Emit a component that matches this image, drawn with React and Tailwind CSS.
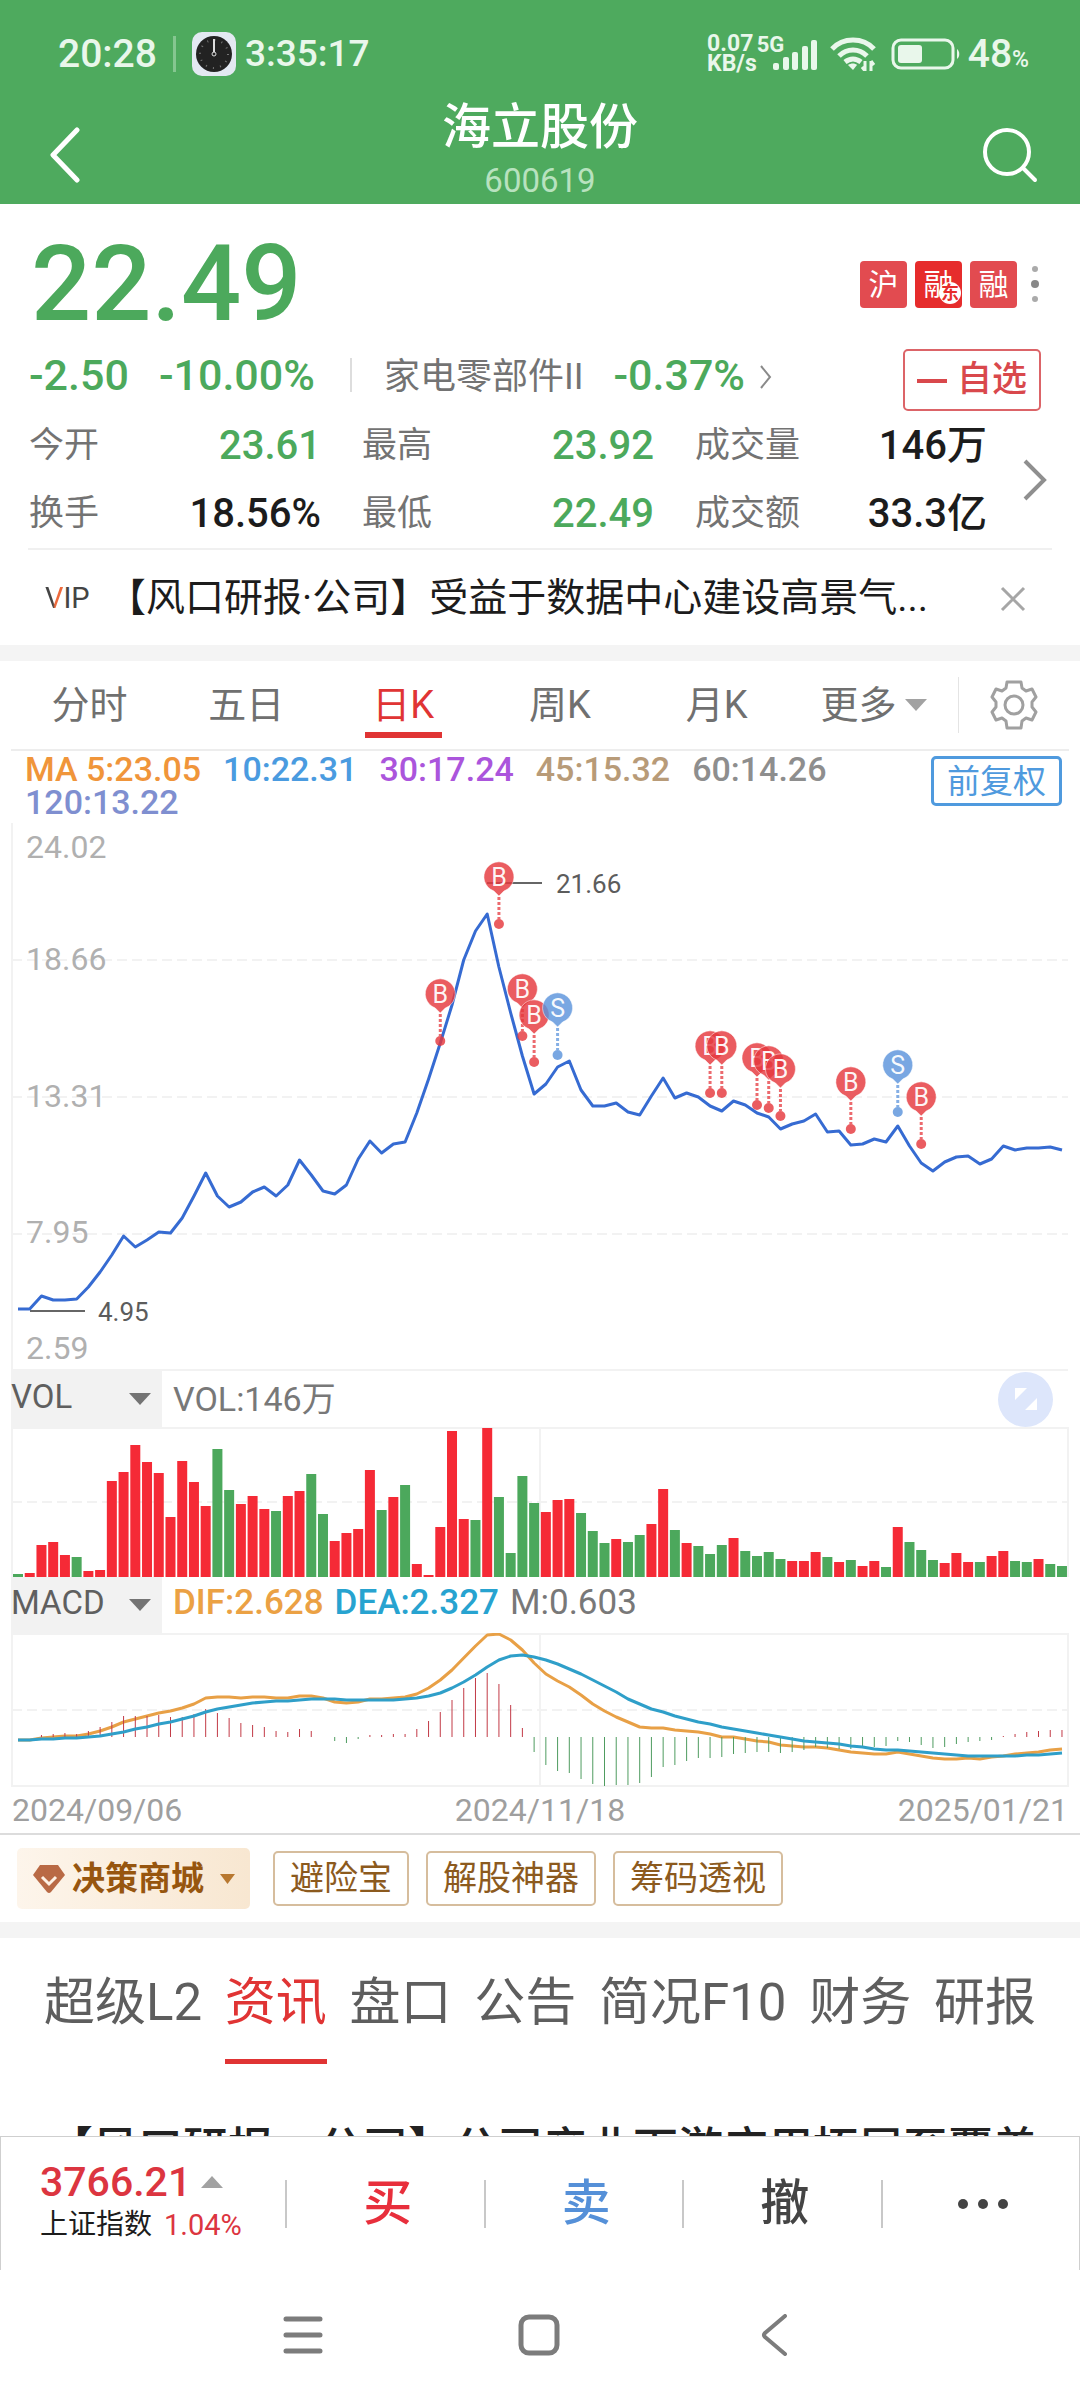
import { useState } from "react";

/* ================= DATA ================= */

const STATS = [
    { label: "今开", value: "23.61", down: true },
    { label: "最高", value: "23.92", down: true },
    { label: "成交量", value: "146万" },
    { label: "换手", value: "18.56%" },
    { label: "最低", value: "22.49", down: true },
    { label: "成交额", value: "33.3亿" }
];

const PERIODS = ["分时", "五日", "日K", "周K", "月K"];

const MA = [
    { text: "MA 5:23.05", color: "text-[#f0953a]" },
    { text: "10:22.31", color: "text-[#4a9be0]" },
    { text: "30:17.24", color: "text-[#ab55dc]" },
    { text: "45:15.32", color: "text-[#b89b78]" },
    { text: "60:14.26", color: "text-[#8e8e8e]" },
    { text: "120:13.22", color: "text-[#7f8fd0]" }
];

const TOOLS = ["避险宝", "解股神器", "筹码透视"];

const SECTIONS = ["超级L2", "资讯", "盘口", "公告", "简况F10", "财务", "研报"];

// close price line, y in chart units
const PRICE = [
    486, 486, 473, 477, 477, 476, 464, 449, 432, 413, 424, 417, 409, 410, 395,
    373, 350, 373, 384, 379, 369, 364, 373, 362, 337, 352, 368, 371, 362, 336,
    318, 330, 321, 319, 290, 256, 220, 182, 137, 108, 91, 144, 190, 233, 271,
    261, 244, 238, 267, 283, 283, 280, 289, 292, 273, 255, 275, 270, 274, 283,
    288, 278, 282, 290, 294, 306, 301, 298, 291, 309, 308, 322, 321, 316, 319,
    303, 323, 340, 348, 339, 334, 333, 341, 336, 323, 327, 325, 325, 324, 327
];

const PINS = [
    { i: 36, y: 218, type: "B" },
    { i: 41, y: 101, type: "B" },
    { i: 43, y: 213, type: "B" },
    { i: 44, y: 239, type: "B" },
    { i: 46, y: 232, type: "S" },
    { i: 59, y: 270, type: "B" },
    { i: 60, y: 270, type: "B" },
    { i: 63, y: 282, type: "B" },
    { i: 64, y: 285, type: "B" },
    { i: 65, y: 293, type: "B" },
    { i: 71, y: 306, type: "B" },
    { i: 75, y: 289, type: "S" },
    { i: 77, y: 321, type: "B" }
];

// volume, negative = falling day
const VOLUME = [
    -3, 4, 32, 35, 22, -20, 6, 7, 96, 105, 132, 115, 104, 60, 116,
    95, 71, -128, -87, 73, 81, 68, -66, 81, 86, -103, -63, 36, 44, 48,
    107, -67, 80, -92, 13, 2, 50, 146, 58, -57, 149, -80, -24, -101, -74,
    65, 77, 78, -64, -46, -34, 38, -35, -42, 53, 88, -47, 34, -31, -23,
    -32, 39, -26, -21, -25, -18, 16, 16, 25, -20, 15, -17, 11, 16, -10,
    50, -35, -27, -17, 14, 24, 15, -15, 21, 26, -16, -15, 18, -13, -11
];

const MACD = [
    0, 0, 2, 3, 4, 3, 6, 10, 15, 21, 21, 21, 22, 20, 20,
    23, 28, 24, 19, 14, 12, 10, 6, 5, 8, 6, 0, -4, -6, -2,
    2, 2, 3, 3, 8, 16, 25, 37, 49, 59, 64, 53, 32, 9, -15,
    -28, -34, -36, -42, -47, -49, -48, -48, -46, -40, -30, -28, -24, -21, -21,
    -20, -17, -16, -15, -15, -16, -15, -13, -10, -11, -12, -12, -11, -10, -9,
    -4, -5, -8, -11, -10, -7, -5, -4, -3, 1, 3, 5, 6, 7, 7
];

const DIF = [
    107, 107, 105, 104, 103, 103, 101, 98, 94, 89, 86, 83, 80, 78, 75,
    71, 65, 64, 64, 65, 64, 64, 65, 65, 63, 63, 65, 69, 70, 69,
    66, 66, 65, 64, 61, 55, 47, 37, 25, 13, 2, 1, 7, 17, 30,
    41, 48, 54, 62, 71, 78, 84, 89, 94, 95, 95, 97, 98, 99, 101,
    104, 104, 106, 108, 109, 112, 113, 114, 114, 115, 117, 119, 120, 121, 121,
    119, 121, 123, 125, 126, 126, 125, 126, 124, 123, 121, 120, 119, 117, 116
];

const DEA = [
    107, 107, 106, 106, 105, 105, 104, 103, 101, 99, 96, 94, 91, 89, 86,
    83, 79, 76, 74, 72, 70, 69, 68, 68, 67, 66, 66, 66, 67, 67,
    67, 67, 67, 66, 65, 63, 60, 55, 49, 42, 34, 27, 23, 22, 24,
    27, 31, 36, 41, 47, 53, 59, 66, 71, 76, 79, 83, 86, 89, 91,
    94, 96, 98, 100, 102, 104, 106, 108, 109, 110, 111, 113, 114, 116, 117,
    117, 118, 119, 120, 121, 122, 123, 123, 123, 123, 123, 122, 122, 121, 120
];

const GRID = "#f2f2f2";
const RED = "#f52a36";
const GREEN = "#4ca85c";

const xAt = i => 18 + i * 11.73;
const toPoints = list => list.map((y, i) => `${xAt(i).toFixed(1)},${y}`).join(" ");

/* ================= APP ================= */

export default function App() {
    const [period, setPeriod] = useState("日K");
    const [section, setSection] = useState("资讯");

    return (
        <div className="flex h-screen flex-col overflow-hidden bg-white font-['Roboto','Noto_Sans_CJK_SC',sans-serif] text-[#222]">
            <header className="shrink-0 bg-[#4eaa5e] text-white">
                <StatusBar />
                <TitleBar />
            </header>

            <main className="min-h-0 flex-1 overflow-hidden">
                <Quote />
                <Notice />
                <div className="h-4 bg-[#f4f4f4]" />

                {/* PERIOD TABS */}
                <div className="mx-[11px] flex h-[90px] items-center border-b-2 border-[#ededed] text-[38px] text-[#707070]">
                    <div className="flex h-full flex-1 pr-[6px]">
                        {PERIODS.map(name => (
                            <button
                                key={name}
                                onClick={() => setPeriod(name)}
                                className={
                                    period === name
                                        ? "flex h-full flex-1 flex-col items-center text-[#e03434]"
                                        : "flex h-full flex-1 flex-col items-center"
                                }
                            >
                                <span className="mt-[17px] leading-[54px]">{name}</span>
                                {period === name && (
                                    <span className="h-[6px] w-[77px] bg-[#e03434]" />
                                )}
                            </button>
                        ))}
                        <button className="flex h-full flex-1 items-center justify-center gap-[8px]">
                            更多
                            <Triangle className="h-[12px] w-[22px] fill-[#a2a2a2]" />
                        </button>
                    </div>
                    <div className="h-[56px] w-px bg-[#e4e4e4]" />
                    <button aria-label="设置" className="flex w-[110px] justify-center">
                        <GearIcon />
                    </button>
                </div>

                {/* MA LEGEND */}
                <div className="flex h-[72px] items-start justify-between pt-[2px] pr-[18px] pl-[25px]">
                    <div className="flex w-[860px] flex-wrap gap-x-[22px] text-[34px] leading-[33px] font-medium">
                        {MA.map(item => (
                            <span key={item.text} className={item.color}>{item.text}</span>
                        ))}
                    </div>
                    <button className="mt-[3px] h-[50px] rounded-[5px] border-[3px] border-[#4f9ade] px-[13px] text-[33px] leading-[46px] whitespace-nowrap text-[#4f9ade]">
                        前复权
                    </button>
                </div>

                <PriceChart />

                {/* VOL */}
                <div className="mx-[11px] flex h-[56px]">
                    <IndicatorSelect label="副图指标一" options={["VOL", "MACD", "KDJ"]} />
                    <div className="flex flex-1 items-center justify-between pr-4 pl-[11px] text-[34px] text-[#787878]">
                        <span>VOL:146万</span>
                        <button
                            aria-label="全屏"
                            className="flex size-[55px] items-center justify-center rounded-full bg-[#dde6fb]"
                        >
                            <svg viewBox="0 0 22 22" className="size-[22px] fill-white">
                                <path d="M0 0h12L0 12zM22 22H10l12-12z" />
                            </svg>
                        </button>
                    </div>
                </div>
                <VolumeChart />

                {/* MACD */}
                <div className="mx-[11px] flex h-[56px]">
                    <IndicatorSelect label="副图指标二" options={["MACD", "VOL", "KDJ"]} />
                    <div className="flex items-center gap-[11px] pb-1 pl-[11px] text-[35px] font-medium">
                        <span className="text-[#eba144]">DIF:2.628</span>
                        <span className="text-[#27a3d0]">DEA:2.327</span>
                        <span className="font-normal text-[#787878]">M:0.603</span>
                    </div>
                </div>
                <MacdChart />

                <div className="flex h-[48px] items-center justify-between border-b-2 border-[#dcdcdc] px-3 text-[32px] text-[#9f9f9f]">
                    <span>2024/09/06</span>
                    <span>2024/11/18</span>
                    <span>2025/01/21</span>
                </div>

                {/* TOOLS */}
                <div className="flex h-[87px] items-center pl-[17px] text-[34px] text-[#8c5a1e]">
                    <button className="mr-[23px] flex h-[61px] items-center rounded-[5px] bg-linear-to-r from-[#fdf5eb] to-[#f8e7d1] pr-[15px] pl-4 text-[33px] font-bold text-[#97560f]">
                        <DiamondIcon />
                        <span className="mr-4 ml-[7px]">决策商城</span>
                        <Triangle className="h-[10px] w-[15px] fill-[#b87830]" />
                    </button>
                    <div className="flex gap-[17px]">
                        {TOOLS.map(name => (
                            <button
                                key={name}
                                className="h-[55px] rounded-[5px] border-2 border-[#d6bd9d] px-[15px] leading-[51px]"
                            >
                                {name}
                            </button>
                        ))}
                    </div>
                </div>
                <div className="h-4 bg-[#f4f4f4]" />

                {/* NEWS */}
                <div className="flex justify-between px-[44px] text-[51px] text-[#5e5e5e]">
                    {SECTIONS.map(name => (
                        <button
                            key={name}
                            onClick={() => setSection(name)}
                            className={
                                section === name
                                    ? "border-b-[5px] border-[#e03434] pt-[33px] pb-[24px] leading-[64px] text-[#e03434]"
                                    : "border-b-[5px] border-transparent pt-[33px] pb-[24px] leading-[64px]"
                            }
                        >
                            {name}
                        </button>
                    ))}
                </div>
                <a
                    href="#news"
                    className="mt-[52px] ml-[48px] block font-['Noto_Sans_CJK_SC',sans-serif] text-[45px] leading-[60px] font-medium whitespace-nowrap text-[#222]"
                >
                    【风口研报·公司】公司产业下游应用拓展至覆盖
                </a>
            </main>

            <TradeBar />
            <SystemNav />
        </div>
    );
}

/* ================= HEADER ================= */

function StatusBar() {
    return (
        <div className="flex h-[100px] items-center justify-between pt-2 pr-[51px] pl-[58px] text-[#e9f7eb]">
            <div className="flex items-center text-[39px]">
                <span className="font-medium">20:28</span>
                <span className="mx-4 h-9 w-[3px] bg-[#85c690]" />
                <svg viewBox="0 0 44 44" className="mr-[9px] size-[44px]">
                    <rect width="44" height="44" rx="10" fill="#e3e9f2" />
                    <circle cx="22" cy="22" r="18" fill="#222" />
                    <circle
                        cx="22" cy="22" r="14" fill="none" stroke="#777"
                        strokeWidth="2" strokeDasharray="1 6.33"
                    />
                    <path d="M22 7v14" stroke="#ddd" strokeWidth="2" />
                    <circle cx="22" cy="22" r="2" fill="#222" stroke="#ddd" />
                </svg>
                <span className="text-[37px] font-medium">3:35:17</span>
            </div>

            <div className="flex items-center">
                <div className="text-[23px] leading-[20px] font-bold">
                    <div>0.07</div>
                    <div>KB/s</div>
                </div>
                {/* signal */}
                <div className="mr-[13px] flex h-[36px] flex-col">
                    <span className="text-[22px] leading-[18px] font-bold">5G</span>
                    <svg viewBox="0 0 44 30" className="-mt-[14px] ml-[16px] h-[30px] w-[44px] fill-current">
                        <rect x="0" y="23" width="6" height="7" rx="2" />
                        <rect x="10" y="17" width="6" height="13" rx="2" />
                        <rect x="19" y="12" width="6" height="18" rx="2" />
                        <rect x="29" y="6" width="6" height="24" rx="2" />
                        <rect x="38" y="0" width="6" height="30" rx="2" />
                    </svg>
                </div>
                <svg viewBox="0 0 46 34" className="mr-[15px] h-[34px] w-[46px]" fill="none" stroke="currentColor">
                    <path d="M2 12C13 0 33 0 44 12" strokeWidth="5" />
                    <path d="M9 19c8-8 20-8 28 0" strokeWidth="5" />
                    <path d="M15 25c5-4 11-4 16 0" strokeWidth="5" />
                    <path d="M18 28c3-2 7-2 9 0l-4 5z" fill="currentColor" stroke="none" />
                    <path d="M35 24v10M41 34V24M35 34l-3-4M41 24l3 4" strokeWidth="3" />
                </svg>
                <svg viewBox="0 0 70 32" className="mr-[7px] h-[32px] w-[70px]">
                    <rect x="2" y="2" width="60" height="28" rx="8" fill="none" stroke="currentColor" strokeWidth="3" />
                    <rect x="7" y="7" width="24" height="18" rx="3" fill="currentColor" />
                    <path d="M66 11c3 2 3 8 0 10z" fill="currentColor" />
                </svg>
                <div className="flex items-baseline font-medium">
                    <span className="text-[39px]">48</span>
                    <span className="text-[23px]">%</span>
                </div>
            </div>
        </div>
    );
}

function TitleBar() {
    return (
        <div className="grid h-[104px] grid-cols-[1fr_auto_1fr] items-center px-[42px]">
            <button aria-label="返回" className="mt-[6px] ml-[7px] justify-self-start">
                <svg viewBox="0 0 32 56" className="h-[56px] w-[32px]" fill="none" stroke="white" strokeWidth="5" strokeLinecap="round" strokeLinejoin="round">
                    <path d="M28 3L4 28l24 25" />
                </svg>
            </button>
            <div className="flex h-full flex-col items-center">
                <h1 className="mt-[2px] text-[49px] leading-[52px] font-medium">海立股份</h1>
                <div className="mt-[5px] text-[33px] leading-[44px] text-[#b8e2bf]">600619</div>
            </div>
            <button aria-label="搜索" className="mt-[6px] justify-self-end">
                <svg viewBox="0 0 56 56" className="size-[56px]" fill="none" stroke="white" strokeWidth="4" strokeLinecap="round">
                    <circle cx="25" cy="25" r="22" />
                    <path d="M41 41l12 12" />
                </svg>
            </button>
        </div>
    );
}

/* ================= QUOTE ================= */

function Quote() {
    return (
        <section className="pt-6">
            <div className="flex items-center justify-between pr-[41px] pl-[31px]">
                <div className="text-[106px] leading-[112px] font-medium text-[#4ca95c]">22.49</div>
                <div className="flex items-center gap-2 text-[30px] leading-[47px] text-white">
                    <span className="size-[47px] rounded-[4px] bg-[#e24b50] text-center">沪</span>
                    <span className="relative size-[47px] rounded-[4px] bg-[#e62c2c] text-center">
                        融
                        <span className="absolute right-[1px] bottom-[4px] size-[22px] rounded-full bg-white text-[18px] leading-[21px] font-bold text-[#e62c2c]">
                            东
                        </span>
                    </span>
                    <span className="size-[47px] rounded-[4px] bg-[#e24b50] text-center">融</span>
                    <button aria-label="更多标签" className="ml-[6px] flex flex-col items-center gap-[8px]">
                        <span className="size-[6px] rounded-full bg-[#aaa]" />
                        <span className="size-[8px] rounded-full bg-[#888]" />
                        <span className="size-[6px] rounded-full bg-[#aaa]" />
                    </button>
                </div>
            </div>

            <div className="mt-2 flex h-[63px] items-center justify-between pr-[39px] pl-[29px]">
                <div className="flex items-center pb-[10px] text-[43px] leading-[48px] text-[#4ca95c]">
                    <span className="font-medium">-2.50</span>
                    <span className="ml-[30px] font-medium">-10.00%</span>
                    <span className="ml-[35px] h-[34px] w-[2px] bg-[#ddd]" />
                    <a href="#sector" className="ml-8 flex items-center">
                        <span className="mt-1 text-[36px] text-[#737373]">家电零部件II</span>
                        <span className="ml-[30px] font-medium">-0.37%</span>
                        <svg viewBox="0 0 14 24" className="mt-1 ml-[14px] h-[24px] w-[14px]" fill="none" stroke="#8a8a8a" strokeWidth="2">
                            <path d="M2 1l9 11-9 11" />
                        </svg>
                    </a>
                </div>
                <button className="flex h-[62px] w-[138px] items-center justify-center gap-[10px] rounded-[5px] border-2 border-[#dc6468] pt-[2px] text-[35px] font-medium text-[#d9484c]">
                    <span className="h-[4px] w-[30px] bg-[#d9484c]" />
                    自选
                </button>
            </div>

            <div className="flex items-center pl-[29px]">
                <dl className="grid flex-1 grid-cols-3 gap-x-[41px] pt-px">
                    {STATS.map(item => (
                        <div key={item.label} className="flex h-[68px] items-center justify-between">
                            <dt className="text-[35px] text-[#737373]">{item.label}</dt>
                            <dd
                                className={
                                    item.down
                                        ? "text-[40px] font-medium text-[#4ca95c]"
                                        : "text-[40px] font-medium text-[#1c1c1c]"
                                }
                            >
                                {item.value}
                            </dd>
                        </div>
                    ))}
                </dl>
                <button aria-label="展开" className="mr-[32px] ml-[35px]">
                    <svg viewBox="0 0 26 42" className="h-[42px] w-[26px]" fill="none" stroke="#8f8f8f" strokeWidth="4">
                        <path d="M3 2l19 19L3 40" />
                    </svg>
                </button>
            </div>
        </section>
    );
}

function Notice() {
    return (
        <div className="mx-[28px] flex h-[97px] items-center border-t-2 border-[#f0f0f0] pt-[2px]">
            <span className="ml-[17px] w-[62px] text-[29px] text-[#444]">
                <span className="bg-linear-to-r from-[#444] from-45% to-[#ee6a3c] to-55% bg-clip-text text-transparent">V</span>
                IP
            </span>
            <a href="#report" className="min-w-0 flex-1 truncate text-[39px] text-[#1c1c1c]">
                【风口研报·公司】受益于数据中心建设高景气...
            </a>
            <button aria-label="关闭" className="mr-[26px] ml-10">
                <svg viewBox="0 0 26 26" className="size-[26px]" stroke="#a6a6a6" strokeWidth="3">
                    <path d="M2 2l22 22M24 2L2 24" />
                </svg>
            </button>
        </div>
    );
}

/* ================= CHARTS ================= */

function IndicatorSelect({ label, options }) {
    return (
        <div className="relative h-full w-[151px] bg-[#f2f2f2]">
            <select
                aria-label={label}
                className="h-full w-full appearance-none bg-transparent pb-1 text-[33px] text-[#5f5f5f] outline-none"
            >
                {options.map(name => (
                    <option key={name}>{name}</option>
                ))}
            </select>
            <Triangle className="pointer-events-none absolute top-[22px] right-[11px] h-[12px] w-[22px] fill-[#747474]" />
        </div>
    );
}

function PriceChart() {
    return (
        <svg viewBox="0 0 1080 548" className="block w-full">
            <path d="M12 0V547H1068" fill="none" stroke={GRID} strokeWidth="2" />
            <path
                d="M12 137H1068M12 274H1068M12 411H1068"
                stroke={GRID} strokeWidth="2" strokeDasharray="10 5"
            />
            <g fill="#b0b0b0" fontSize="32">
                <text x="26" y="35">24.02</text>
                <text x="26" y="147">18.66</text>
                <text x="26" y="284">13.31</text>
                <text x="26" y="420">7.95</text>
                <text x="26" y="536">2.59</text>
            </g>
            <path d="M30 488H85M487 60H542" stroke="#666" strokeWidth="2" />
            <g fill="#5c5c5c" fontSize="26">
                <text x="98" y="498">4.95</text>
                <text x="556" y="70">21.66</text>
            </g>
            <polyline points={toPoints(PRICE)} fill="none" stroke="#366bd2" strokeWidth="3" strokeLinejoin="round" />
            {PINS.map(pin => (
                <TradePin key={pin.i} {...pin} />
            ))}
        </svg>
    );
}

function TradePin({ i, y, type }) {
    const x = xAt(i);
    const color = type === "B" ? "#e5383d" : "#5c94dc";
    return (
        <g fill={color} fillOpacity="0.82">
            <path
                d={`M${x - 5} ${y - 33}A15 15 0 1 1 ${x + 5} ${y - 33}L${x} ${y - 28}z`}
                stroke="white" strokeOpacity="0.5"
            />
            <path d={`M${x} ${y - 27}V${y - 5}`} stroke={color} strokeOpacity="0.75" strokeWidth="3" strokeDasharray="3 2" />
            <circle cx={x} cy={y} r="5" />
            <text x={x} y={y - 38} textAnchor="middle" fontSize="25" fill="white" fillOpacity="0.95">
                {type}
            </text>
        </g>
    );
}

function VolumeChart() {
    return (
        <svg viewBox="0 0 1080 150" className="block w-full">
            <path d="M12 150V1H1068V150M540 1V150" fill="none" stroke={GRID} strokeWidth="2" />
            <path d="M12 75H1068" stroke={GRID} strokeWidth="2" strokeDasharray="10 5" />
            {VOLUME.map((v, i) => (
                <rect
                    key={i}
                    x={xAt(i) - 5}
                    y={150 - Math.abs(v)}
                    width="10"
                    height={Math.abs(v)}
                    fill={v < 0 ? GREEN : RED}
                />
            ))}
        </svg>
    );
}

function MacdChart() {
    return (
        <svg viewBox="0 0 1080 154" className="block w-full">
            <path d="M12 1H1068V153H12zM540 1V153" fill="none" stroke={GRID} strokeWidth="2" />
            <path d="M12 77H1068" stroke={GRID} strokeWidth="2" strokeDasharray="10 5" />
            <polyline points={toPoints(DIF)} fill="none" stroke="#e8a046" strokeWidth="3" strokeLinejoin="round" />
            {MACD.map((v, i) => (
                <path
                    key={i}
                    d={`M${xAt(i)} 104v${-v}`}
                    stroke={v < 0 ? "#4f9c60" : "#c23a46"}
                    strokeWidth="1"
                />
            ))}
            <polyline points={toPoints(DEA)} fill="none" stroke="#2f9fc9" strokeWidth="3" strokeLinejoin="round" />
        </svg>
    );
}

/* ================= FOOTER ================= */

function TradeBar() {
    return (
        <footer className="flex h-[134px] shrink-0 items-center border border-b-0 border-[#cfcfcf] bg-white">
            <a href="#index" className="w-[284px] pb-1 pl-[39px]">
                <div className="flex items-center gap-[10px] text-[41px] leading-[46px] font-medium text-[#dc3540]">
                    3766.21
                    <Triangle className="h-[12px] w-[22px] rotate-180 fill-[#a2a2a2]" />
                </div>
                <div className="flex items-center gap-3 text-[28px] leading-[40px] text-[#1c1c1c]">
                    上证指数
                    <span className="text-[29px] text-[#dc3540]">1.04%</span>
                </div>
            </a>
            <TradeButton className="text-[#e82f3c]">买</TradeButton>
            <TradeButton className="text-[#5590d8]">卖</TradeButton>
            <TradeButton className="text-[#444]">撤</TradeButton>
            <TradeButton className="text-[#444]" label="更多操作">
                <svg viewBox="0 0 50 10" className="h-[10px] w-[50px] fill-current">
                    <circle cx="5" cy="5" r="5" />
                    <circle cx="25" cy="5" r="5" />
                    <circle cx="45" cy="5" r="5" />
                </svg>
            </TradeButton>
        </footer>
    );
}

function TradeButton({ className, label, children }) {
    return (
        <div className="flex h-[48px] flex-1 border-l-2 border-[#c8c8c8]">
            <button
                aria-label={label}
                className={`flex flex-1 items-center justify-center pl-[5px] text-[49px] leading-[48px] font-medium ${className}`}
            >
                {children}
            </button>
        </div>
    );
}

function SystemNav() {
    return (
        <nav className="flex h-[130px] shrink-0 items-center justify-center gap-[195px] bg-white pr-[2px]">
            <button aria-label="最近任务">
                <svg viewBox="0 0 40 42" className="h-[42px] w-[40px]" stroke="#7c7c7c" strokeWidth="5" strokeLinecap="round">
                    <path d="M3 5h34M3 21h34M3 37h34" />
                </svg>
            </button>
            <button aria-label="主页">
                <svg viewBox="0 0 42 42" className="size-[42px]" fill="none" stroke="#7c7c7c" strokeWidth="5">
                    <rect x="3" y="3" width="36" height="36" rx="8" />
                </svg>
            </button>
            <button aria-label="返回上页">
                <svg viewBox="0 0 40 42" className="h-[42px] w-[40px]" fill="none" stroke="#7c7c7c" strokeWidth="4" strokeLinecap="round" strokeLinejoin="round">
                    <path d="M30 2L10 19q-2 2 0 4l20 17" />
                </svg>
            </button>
        </nav>
    );
}

/* ================= ICONS ================= */

function Triangle({ className }) {
    return (
        <svg viewBox="0 0 22 12" preserveAspectRatio="none" className={className}>
            <path d="M0 0h22L11 12z" />
        </svg>
    );
}

function GearIcon() {
    return (
        <svg viewBox="0 0 60 62" className="h-[62px] w-[60px]" fill="none" stroke="#a0a0a0" strokeWidth="3" strokeLinejoin="round">
            <path d="M23 8h14l1 6 4 3 6-2 4 8-4 5v5l4 5-4 8-6-2-4 3-1 7H23l-1-7-4-3-6 2-4-8 4-5v-5l-4-5 4-8 6 2 4-3z" />
            <circle cx="30" cy="31" r="9" />
        </svg>
    );
}

function DiamondIcon() {
    return (
        <svg viewBox="0 0 32 28" className="h-[28px] w-[32px]">
            <path d="M7 0h18l7 10-14 17q-2 2-4 0L0 10z" fill="#b96a45" />
            <path d="M9 12l7 7 7-7" fill="none" stroke="#fdf1e4" strokeWidth="3" />
        </svg>
    );
}
